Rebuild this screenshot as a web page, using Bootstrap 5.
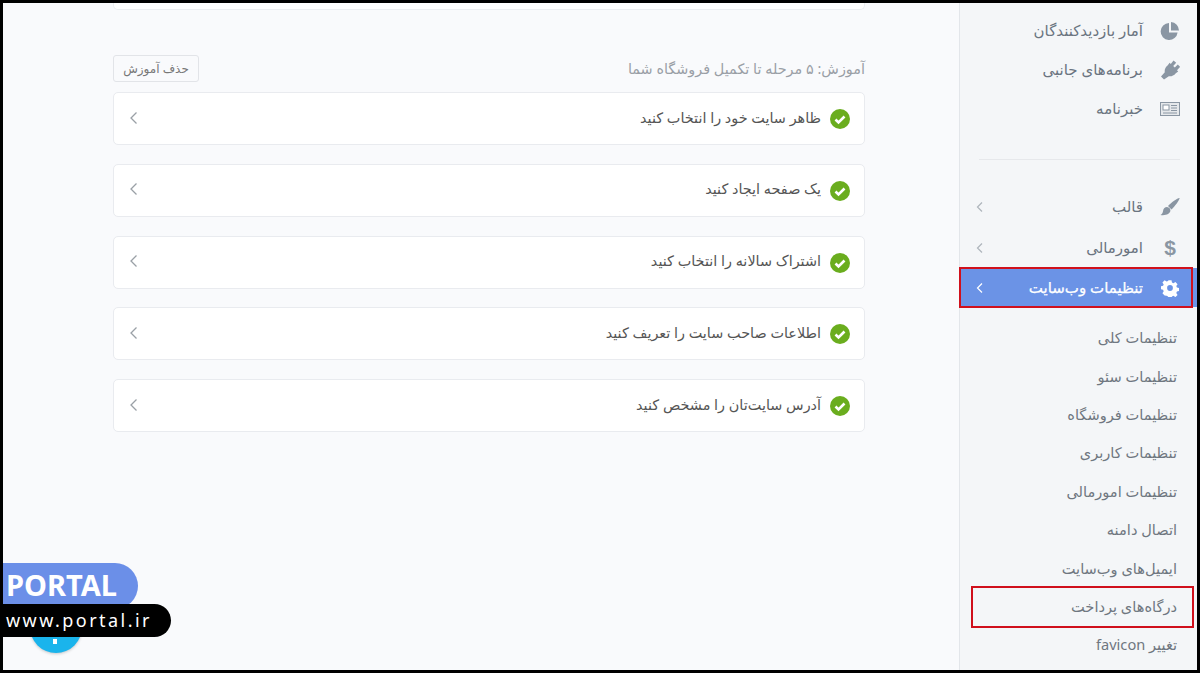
<!DOCTYPE html>
<html lang="fa" dir="rtl">
<head>
<meta charset="utf-8">
<title>آموزش</title>
<link href="https://cdn.jsdelivr.net/npm/bootstrap@5.3.0/dist/css/bootstrap.min.css" rel="stylesheet">
<style>
html,body{height:100%;margin:0;overflow:hidden;background:#000}
body{font-family:"Noto Sans","DejaVu Sans",sans-serif;font-size:13px;color:#555}
.frame{height:673px;border-style:solid;border-color:#000;border-width:3px;background:#f9fafc;display:flex;position:relative;overflow:hidden}
.side{width:238px;flex:none;background:#f4f6f8;border-left:1px solid #e3e6ea;padding-top:8px}
.mainarea{flex:1;padding-right:94px;padding-left:110px}
.sitem{height:39px;display:flex;align-items:center;padding:0 17px 0 15px;color:#6a7480;font-size:15px}
.sitem svg.ic,.dollar{width:20px;height:20px;fill:#8a96a3;flex:none;margin-left:17px}
.dollar{color:#8a96a3;font:700 21px/20px "Liberation Sans",sans-serif;text-align:center}
.sitem .chev{margin-right:auto;width:9px;height:12px;stroke:#aeb5bc}
.sitem.on{background:#6b93e6;color:#fff;margin-top:1px;position:relative;-webkit-text-stroke:.25px #fff}
.sitem.on::after{content:"";position:absolute;left:-1px;right:4px;top:-1px;bottom:-1px;border:2px solid #d0101c}
.sitem.on svg.ic{fill:#fff;width:18px;height:18px;margin-right:1px;margin-left:18px}
.sitem.on .chev{stroke:#fff}
.sline{border-top:1px solid #e6e8eb;margin:31px 17px 27px 19px}
.sub{height:38.4px;display:flex;align-items:center;padding-right:20px;font-size:14.6px;color:#6f7780}
.sub.mark2{outline:2px solid #d0101c;outline-offset:0;margin:0 5px 0 13px;padding-right:15px}
.topcard{height:7px;background:#fff;border:1px solid #eceef1;border-top:0;border-radius:0 0 5px 5px;margin-bottom:45px}
.headrow{height:27px;display:flex;align-items:center;justify-content:space-between;margin-bottom:10px}
.headtxt{color:#9a9fa6;font-size:14.4px}
.btn-del{font-size:12px;color:#777;background:#f9fafc;border:1px solid #e2e4e8;border-radius:3px;padding:0;width:86px;height:27px;line-height:25px}
.stepc{height:53px;background:#fff;border:1px solid #e9ebef;border-radius:5px;margin-bottom:18.8px;display:flex;align-items:center;padding:0 14px 0 15px;font-size:14.4px;color:#555}
.stepc span{margin-top:-2px}
.okc{width:20px;height:20px;flex:none;margin-left:9px;margin-top:1px}
.stepc .chev{margin-right:auto;width:9px;height:14px;stroke:#9aa0a6;margin-top:-2px}
.fab{position:absolute;left:27px;bottom:17px;width:52px;height:52px;border-radius:50%;background:#1ab4ec;box-shadow:0 1px 3px rgba(0,0,0,.2)}
.fab::after{content:"";position:absolute;left:23px;top:38px;width:4px;height:5px;background:#fff}
.lg1{position:absolute;left:0;top:560px;width:135px;height:46px;background:#6b8fe8;border-radius:0 24px 24px 0;color:#fff;font:700 29px/43px "Noto Sans",sans-serif;padding-left:3px;direction:ltr;text-align:left}
.lg2{position:absolute;left:0;top:601px;width:168px;height:33px;background:#000;border-radius:0 17px 17px 0;color:#fff;font:400 18px/32px "Noto Sans",sans-serif;letter-spacing:2.45px;padding-left:3px;direction:ltr;text-align:left}
</style>
</head>
<body>
<div class="frame">
 <aside class="side">
  <div class="sitem"><svg class="ic" viewBox="0 0 20 20"><path d="M9 2a8.500 8.500 0 1 0 8.600 9.500H9z"/><path d="M11 1v8.500h8A8.500 8.500 0 0 0 11 1z"/></svg><span>آمار بازدیدکنندگان</span></div>
  <div class="sitem"><svg class="ic" viewBox="0 0 20 20"><path d="M13.500.5l2.700 2.300-3 3.300 1.600 1.500 3-3.200 2.400 2.500-3.200 3.300 1.200 1.200-2.400 1.800c-2 2.500-4.500 3.400-7 3L4 19.500 1 16.500l3.800-4.300c-.5-2.500.5-5 3-7l1.800-2.400 1.200 1.200z"/></svg><span>برنامه‌های جانبی</span></div>
  <div class="sitem"><svg class="ic" viewBox="0 0 20 20" style="fill:none;stroke:#8a96a3"><rect x=".5" y="3.500" width="19" height="13" fill="#e5e8eb"/><rect x="3" y="6" width="6" height="5" fill="#fff"/><path d="M11 6.500h6M11 9h6M11 11.500h6M3 14h14"/></svg><span>خبرنامه</span></div>
  <div class="sline"></div>
  <div class="sitem"><svg class="ic" viewBox="0 0 20 20"><path d="M19.500 1c.8.800-4.500 8.500-8 11.500L8 9C11 5.500 18.700.2 19.500 1z"/><path d="M7 10c2.300.2 3.600 1.700 3.400 3.800-.4 3.200-4.700 5-9.900 4.200 1.700-1 2.400-2.200 2.600-4.200C3.300 11.500 5 10 7 10z"/></svg><span>قالب</span><svg class="chev" viewBox="0 0 9 12" fill="none"><path d="M7 1.500L2.500 6 7 10.500" stroke-width="1.200"/></svg></div>
  <div class="sitem" style="margin-top:2px"><span class="dollar">$</span><span>امورمالی</span><svg class="chev" viewBox="0 0 9 12" fill="none"><path d="M7 1.500L2.500 6 7 10.500" stroke-width="1.200"/></svg></div>
  <div class="sitem on"><svg class="ic" viewBox="0 0 20 20"><path fill-rule="evenodd" d="M8.300 1.500h3.400l.5 2.500 1.600.7 2.200-1.400 2.400 2.400-1.400 2.200.7 1.600 2.300.5v3.400l-2.300.5-.7 1.600 1.400 2.200-2.400 2.400-2.200-1.400-1.600.7-.5 2.300H8.300l-.5-2.300-1.600-.7L4 18.200l-2.400-2.400L3 13.600l-.7-1.600L0 11.500V8.100l2.300-.5.7-1.600L1.600 3.800 4 1.400l2.200 1.400 1.600-.7zM10 6.800a3.200 3.200 0 1 0 0 6.400 3.200 3.200 0 0 0 0-6.400z"/></svg><span>تنظیمات وب‌سایت</span><svg class="chev" viewBox="0 0 9 12" fill="none"><path d="M7 1.500L2.500 6 7 10.500" stroke-width="1.200"/></svg></div>
  <div style="height:12px"></div>
  <div class="sub">تنظیمات کلی</div>
  <div class="sub">تنظیمات سئو</div>
  <div class="sub">تنظیمات فروشگاه</div>
  <div class="sub">تنظیمات کاربری</div>
  <div class="sub">تنظیمات امورمالی</div>
  <div class="sub">اتصال دامنه</div>
  <div class="sub">ایمیل‌های وب‌سایت</div>
  <div class="sub mark2">درگاه‌های پرداخت</div>
  <div class="sub">تغییر favicon</div>
 </aside>
 <main class="mainarea">
  <div class="topcard"></div>
  <div class="headrow"><span class="headtxt">آموزش: ۵ مرحله تا تکمیل فروشگاه شما</span><button class="btn btn-del" type="button">حذف آموزش</button></div>
  <div class="stepc"><svg class="okc" viewBox="0 0 20 20"><circle cx="10" cy="10" r="10" fill="#6aad1e"/><path d="M5.500 10.500l3 3 6-6" fill="none" stroke="#fff" stroke-width="2.600"/></svg><span>ظاهر سایت خود را انتخاب کنید</span><svg class="chev" viewBox="0 0 9 14" fill="none"><path d="M7.500 1.500L2 7l5.500 5.500" stroke-width="1.300"/></svg></div>
  <div class="stepc"><svg class="okc" viewBox="0 0 20 20"><circle cx="10" cy="10" r="10" fill="#6aad1e"/><path d="M5.500 10.500l3 3 6-6" fill="none" stroke="#fff" stroke-width="2.600"/></svg><span>یک صفحه ایجاد کنید</span><svg class="chev" viewBox="0 0 9 14" fill="none"><path d="M7.500 1.500L2 7l5.500 5.500" stroke-width="1.300"/></svg></div>
  <div class="stepc"><svg class="okc" viewBox="0 0 20 20"><circle cx="10" cy="10" r="10" fill="#6aad1e"/><path d="M5.500 10.500l3 3 6-6" fill="none" stroke="#fff" stroke-width="2.600"/></svg><span>اشتراک سالانه را انتخاب کنید</span><svg class="chev" viewBox="0 0 9 14" fill="none"><path d="M7.500 1.500L2 7l5.500 5.500" stroke-width="1.300"/></svg></div>
  <div class="stepc"><svg class="okc" viewBox="0 0 20 20"><circle cx="10" cy="10" r="10" fill="#6aad1e"/><path d="M5.500 10.500l3 3 6-6" fill="none" stroke="#fff" stroke-width="2.600"/></svg><span>اطلاعات صاحب سایت را تعریف کنید</span><svg class="chev" viewBox="0 0 9 14" fill="none"><path d="M7.500 1.500L2 7l5.500 5.500" stroke-width="1.300"/></svg></div>
  <div class="stepc"><svg class="okc" viewBox="0 0 20 20"><circle cx="10" cy="10" r="10" fill="#6aad1e"/><path d="M5.500 10.500l3 3 6-6" fill="none" stroke="#fff" stroke-width="2.600"/></svg><span>آدرس سایت‌تان را مشخص کنید</span><svg class="chev" viewBox="0 0 9 14" fill="none"><path d="M7.500 1.500L2 7l5.500 5.500" stroke-width="1.300"/></svg></div>
 </main>
 <div class="fab"></div>
 <div class="lg1">PORTAL</div>
 <div class="lg2">www.portal.ir</div>
</div>
<script src="https://cdn.jsdelivr.net/npm/bootstrap@5.3.0/dist/js/bootstrap.bundle.min.js"></script>
</body>
</html>
